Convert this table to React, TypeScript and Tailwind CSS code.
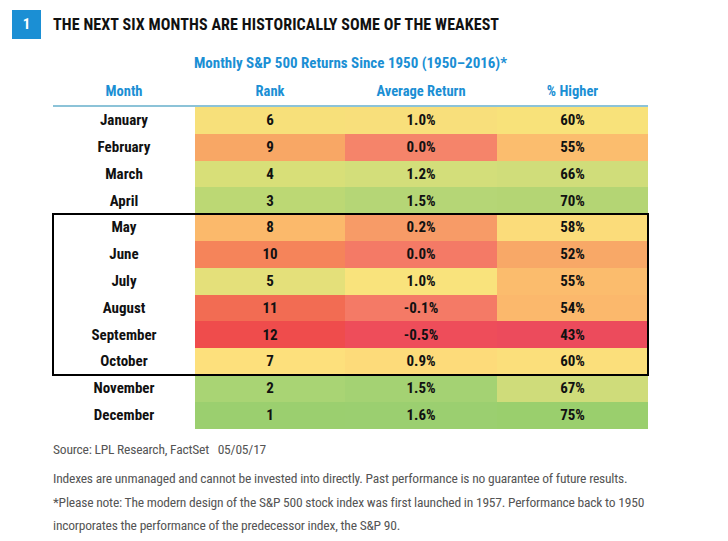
import React from 'react';

type Row = {
  month: string;
  rank: string;
  avg: string;
  pct: string;
  c1: string;
  c2: string;
  c3: string;
};

const rows: Row[] = [
  { month: 'January', rank: '6', avg: '1.0%', pct: '60%', c1: 'bg-[#f7e07a]', c2: 'bg-[#f8df7b]', c3: 'bg-[#f8e27a]' },
  { month: 'February', rank: '9', avg: '0.0%', pct: '55%', c1: 'bg-[#f8a765]', c2: 'bg-[#f5846a]', c3: 'bg-[#fbbd6e]' },
  { month: 'March', rank: '4', avg: '1.2%', pct: '66%', c1: 'bg-[#d8df78]', c2: 'bg-[#d3de7a]', c3: 'bg-[#d0dd7a]' },
  { month: 'April', rank: '3', avg: '1.5%', pct: '70%', c1: 'bg-[#bcd874]', c2: 'bg-[#b5d676]', c3: 'bg-[#b4d574]' },
  { month: 'May', rank: '8', avg: '0.2%', pct: '58%', c1: 'bg-[#fbb96b]', c2: 'bg-[#f79b67]', c3: 'bg-[#fbdc7a]' },
  { month: 'June', rank: '10', avg: '0.0%', pct: '52%', c1: 'bg-[#f5845a]', c2: 'bg-[#f47a66]', c3: 'bg-[#f8a867]' },
  { month: 'July', rank: '5', avg: '1.0%', pct: '55%', c1: 'bg-[#e4e07a]', c2: 'bg-[#f9e37c]', c3: 'bg-[#fbbc6d]' },
  { month: 'August', rank: '11', avg: '-0.1%', pct: '54%', c1: 'bg-[#f26c53]', c2: 'bg-[#f47a66]', c3: 'bg-[#fbb86c]' },
  { month: 'September', rank: '12', avg: '-0.5%', pct: '43%', c1: 'bg-[#ef4c4c]', c2: 'bg-[#ee4d5a]', c3: 'bg-[#ec4b5c]' },
  { month: 'October', rank: '7', avg: '0.9%', pct: '60%', c1: 'bg-[#fde07c]', c2: 'bg-[#fddb7a]', c3: 'bg-[#fbdf7b]' },
  { month: 'November', rank: '2', avg: '1.5%', pct: '67%', c1: 'bg-[#a9d474]', c2: 'bg-[#a4d273]', c3: 'bg-[#cfdc7a]' },
  { month: 'December', rank: '1', avg: '1.6%', pct: '75%', c1: 'bg-[#9bcf6f]', c2: 'bg-[#9bcf70]', c3: 'bg-[#9acf6d]' },
];

const grid = 'grid grid-cols-[142px_150px_152px_151px]';

function TableRow({ r }: { r: Row }) {
  return (
    <div className={`${grid} h-[26.8px] text-[15px] font-bold text-[#111]`}>
      <div className="flex items-center justify-center bg-white">{r.month}</div>
      <div className={`flex items-center justify-center ${r.c1}`}>{r.rank}</div>
      <div className={`flex items-center justify-center ${r.c2}`}>{r.avg}</div>
      <div className={`flex items-center justify-center ${r.c3}`}>{r.pct}</div>
    </div>
  );
}

export default function App() {
  return (
    <div className="w-[728px] h-[541px] bg-white overflow-hidden font-['Liberation_Sans_Narrow','Roboto_Condensed','Arial_Narrow',sans-serif]">
      {/* Title bar */}
      <div className="flex items-center pt-[10px] pl-[12px]">
        <div className="w-[29px] h-[29px] bg-[#1b8fd4] text-white font-bold text-[15px] flex items-center justify-center">
          1
        </div>
        <h1 className="ml-[12px] text-[16px] font-bold text-[#111] tracking-[0.1px]">
          THE NEXT SIX MONTHS ARE HISTORICALLY SOME OF THE WEAKEST
        </h1>
      </div>

      <div className="ml-[53px] w-[595px]">
        <div className="mt-[15px] text-center text-[15px] font-bold text-[#1b8fd4] leading-[18px]">
          Monthly S&amp;P 500 Returns Since 1950 (1950–2016)*
        </div>

        {/* Column headers */}
        <div className={`${grid} mt-[7px] h-[26px] items-center text-[14.5px] font-bold text-[#1b8fd4]`}>
          <div className="text-center">Month</div>
          <div className="text-center">Rank</div>
          <div className="text-center">Average Return</div>
          <div className="text-center">% Higher</div>
        </div>
        <div className="h-[2px] bg-[#8cc3d8]" />

        <div>
          {rows.slice(0, 4).map((r) => (
            <TableRow key={r.month} r={r} />
          ))}
        </div>
        <div className="outline-2 outline-black -outline-offset-1">
          {rows.slice(4, 10).map((r) => (
            <TableRow key={r.month} r={r} />
          ))}
        </div>
        <div>
          {rows.slice(10).map((r) => (
            <TableRow key={r.month} r={r} />
          ))}
        </div>
      </div>

      {/* Notes */}
      <div className="ml-[53px] mt-[8px] text-[13.5px] tracking-[-0.2px] text-[#555] leading-[25px]">
        <p>Source: LPL Research, FactSet&nbsp;&nbsp; 05/05/17</p>
        <p className="mt-[4px]">
          Indexes are unmanaged and cannot be invested into directly. Past performance is no guarantee of future results.
        </p>
        <p className="leading-[23px]">
          *Please note: The modern design of the S&amp;P 500 stock index was first launched in 1957. Performance back to 1950
          <br />
          incorporates the performance of the predecessor index, the S&amp;P 90.
        </p>
      </div>
    </div>
  );
}
